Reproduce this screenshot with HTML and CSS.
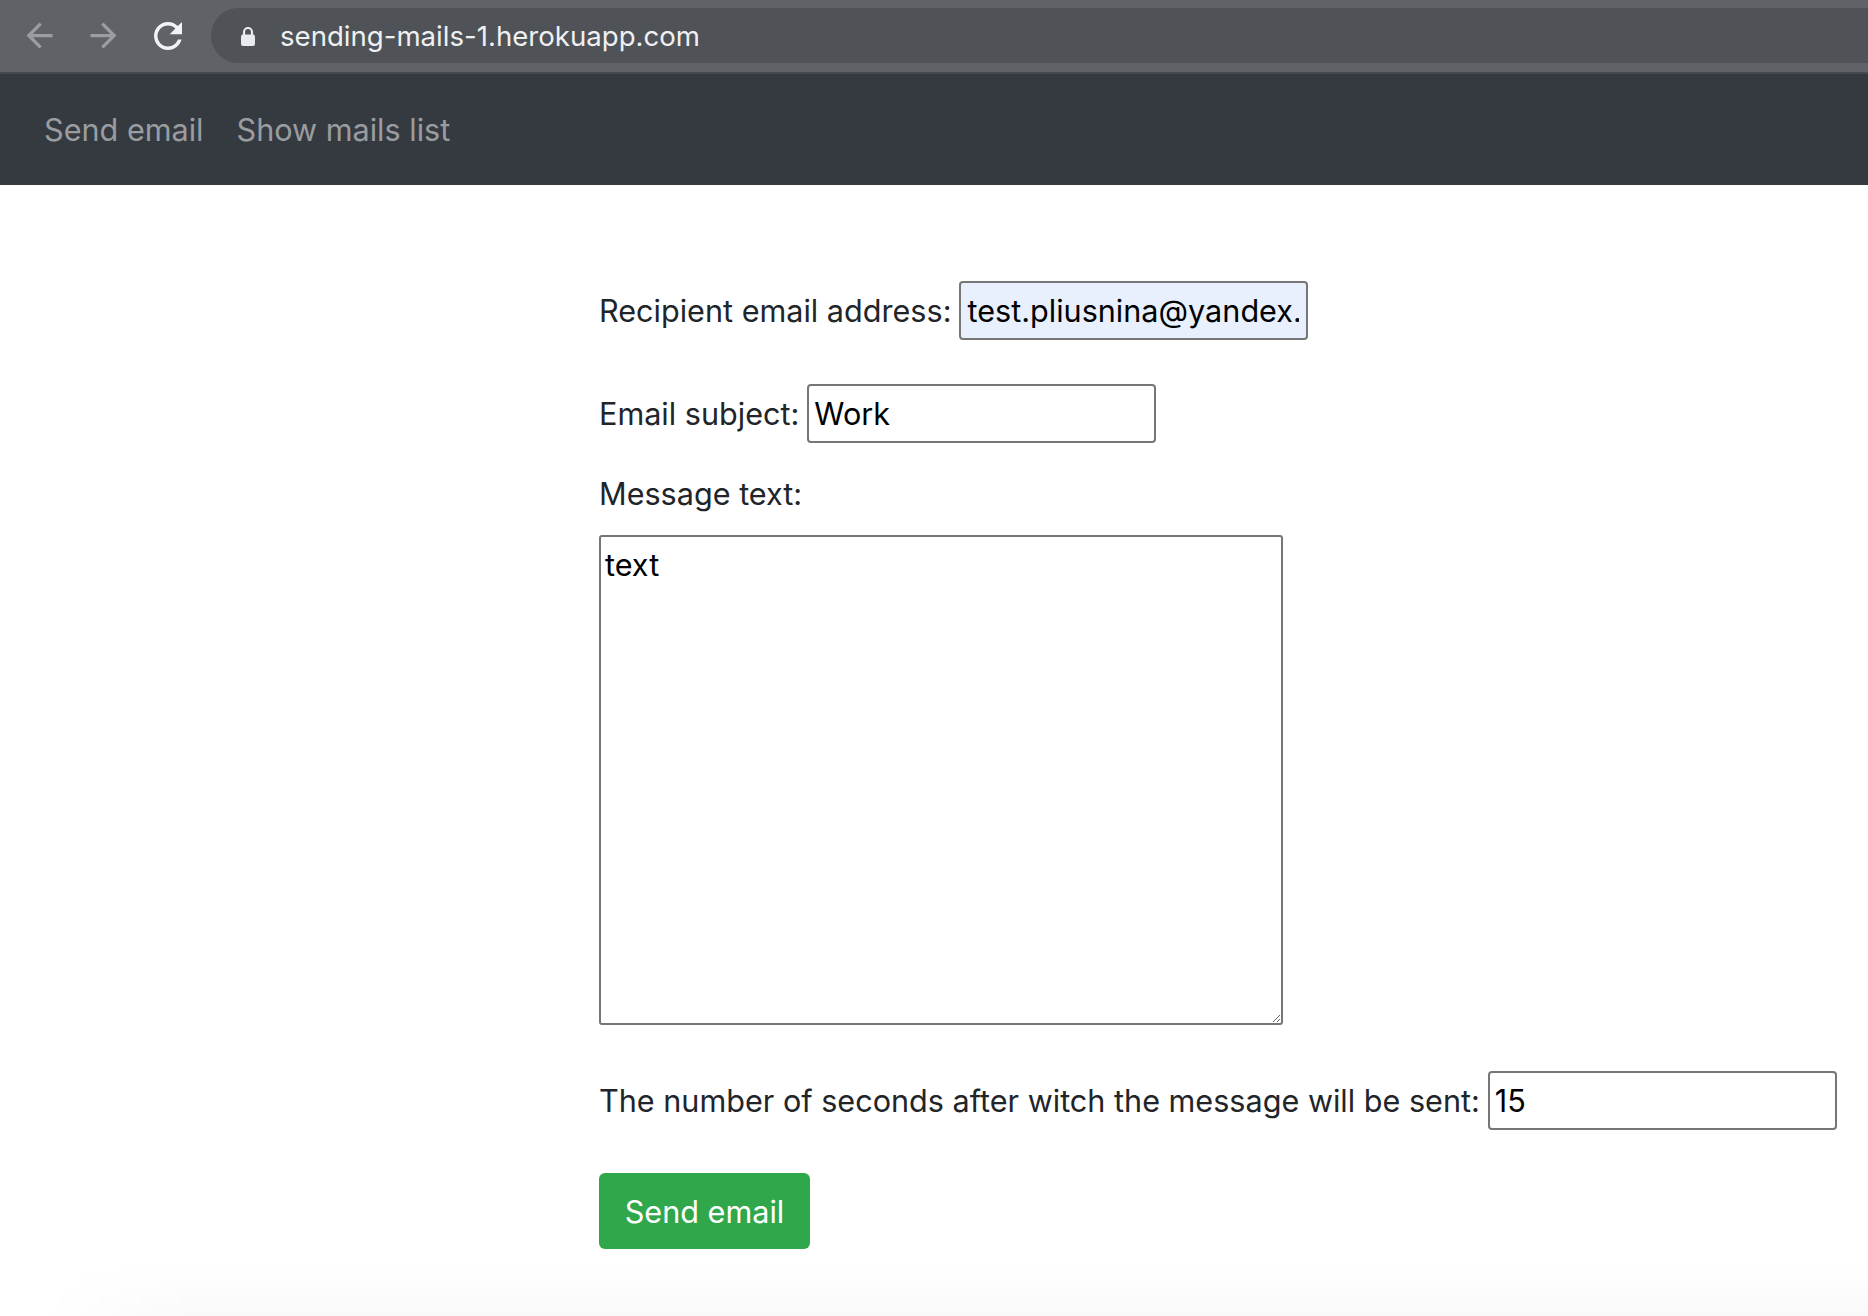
FILE: index.html
```html
<!DOCTYPE html>
<html lang="en">
<head>
<meta charset="utf-8">
<title>Send email</title>
<link rel="stylesheet" href="styles.css">
</head>
<body>
<div class="chrome">
  <div class="chrome-nav">
    <svg class="ico arrow dim" viewBox="0 0 24 24"><path d="M20 11H7.83l5.59-5.59L12 4l-8 8 8 8 1.41-1.41L7.83 13H20v-2z"/></svg>
    <svg class="ico arrow dim" viewBox="0 0 24 24"><path d="M4 11h12.17l-5.59-5.59L12 4l8 8-8 8-1.41-1.41L16.17 13H4v-2z"/></svg>
    <svg class="ico reload" viewBox="0 0 24 24"><path d="M17.65 6.35C16.2 4.9 14.21 4 12 4c-4.42 0-7.99 3.58-7.99 8s3.57 8 7.99 8c3.73 0 6.84-2.55 7.73-6h-2.08c-.82 2.330-3.04 4-5.65 4-3.31 0-6-2.690-6-6s2.69-6 6-6c1.66 0 3.14.69 4.22 1.78L13 11h7V4l-2.35 2.35z"/></svg>
  </div>
  <div class="omnibox">
    <svg class="lock" viewBox="0 0 16 20"><path d="M4 9.5V6a4 4 0 0 1 8 0v3.5" fill="none" stroke="#e8eaed" stroke-width="2.2"/><rect x="1" y="8.5" width="14" height="11.5" rx="2" fill="#e8eaed"/></svg>
    <span class="url">sending-mails-1.herokuapp.com</span>
  </div>
</div>
<nav class="navbar">
  <a class="nav-link" href="#">Send email</a>
  <a class="nav-link" href="#">Show mails list</a>
</nav>
<main class="container">
  <form class="mail-form">
    <div class="field-row row-email">
      <label class="label" for="to">Recipient email address:</label>
      <input class="input input-autofill" id="to" type="text" value="test.pliusnina@yandex.ru">
    </div>
    <div class="field-row row-subject">
      <label class="label" for="subject">Email subject:</label>
      <input class="input" id="subject" type="text" value="Work">
    </div>
    <label class="label label-block" for="msg">Message text:</label>
    <textarea class="textarea" id="msg">text</textarea>
    <div class="field-row row-seconds">
      <label class="label" for="sec">The number of seconds after witch the message will be sent:</label>
      <input class="input" id="sec" type="text" value="15">
    </div>
    <button class="btn-send" type="button">Send email</button>
  </form>
</main>
<div class="bottom-shade"></div>
</body>
</html>
```
FILE: styles.css
```css
* { box-sizing: border-box; }
html, body { margin: 0; padding: 0; }
body {
  background: #ffffff;
  font-family: "Inter", "Liberation Sans", sans-serif;
  color: #212529;
  min-height: 1316px;
}
.chrome {
  height: 74px;
  background: #5f6267;
  border-bottom: 2px solid #46494e;
  display: flex;
  align-items: flex-start;
  padding-top: 8px;
}
.chrome-nav {
  display: flex;
  align-items: center;
  height: 55px;
  padding-left: 20px;
  gap: 25px;
}
.ico { width: 39px; height: 39px; display: block; }
.ico.dim path { fill: #9a9da1; }
.ico.reload { width: 42px; height: 42px; margin-left: -1px; }
.ico.reload path { fill: #f1f3f4; }
.omnibox {
  margin-left: 22px;
  flex: 1;
  height: 55px;
  background: #4f5257;
  border-radius: 28px 0 0 28px;
  display: flex;
  align-items: center;
  padding-left: 29px;
}
.lock { width: 16px; height: 20px; display: block; }
.url {
  margin-left: 24px;
  font-family: "Inter", "Liberation Sans", sans-serif;
  font-size: 27.6px;
  color: #eef0f2;
}
.navbar {
  height: 111px;
  background: #353a41;
  display: flex;
  align-items: center;
  padding-left: 44px;
  gap: 33px;
}
.nav-link {
  color: #9a9da0;
  text-decoration: none;
  font-size: 30.6px;
}
.container {
  width: 670px;
  margin: 0 auto;
  padding-top: 96px;
}
.mail-form { display: flex; flex-direction: column; align-items: flex-start; }
.field-row {
  display: flex;
  align-items: center;
  gap: 8px;
  white-space: nowrap;
}
.row-subject { margin-top: 44px; }
.row-seconds { margin-top: 46px; }
.label {
  font-size: 30.6px;
  line-height: 36px;
  color: #212529;
}
.label-block { margin-top: 33px; display: block; }
.input {
  width: 349px;
  height: 59px;
  border: 2px solid #767676;
  border-radius: 4px;
  padding: 0 5px;
  font-family: "Inter", "Liberation Sans", sans-serif;
  font-size: 30.6px;
  color: #000;
  background: #fff;
  flex: none;
}
.input-autofill { background: #e8f0fe; padding: 0 7px 0 6px; }
.textarea {
  margin-top: 23px;
  width: 684px;
  height: 490px;
  border: 2px solid #767676;
  border-radius: 3px;
  padding: 10px 4px;
  font-family: "Inter", "Liberation Sans", sans-serif;
  font-size: 30.6px;
  line-height: 36px;
  color: #000;
  resize: both;
}
.btn-send {
  margin-top: 43px;
  width: 211px;
  height: 76px;
  background: #2fa74a;
  border: none;
  border-radius: 6px;
  color: #fff;
  font-family: "Inter", "Liberation Sans", sans-serif;
  font-size: 30.6px;
  padding: 0;
}
.bottom-shade {
  position: fixed;
  left: 40px;
  right: 0;
  bottom: 0;
  height: 50px;
  pointer-events: none;
  background: linear-gradient(to bottom, rgba(0,0,0,0), rgba(0,0,0,0.022));
  -webkit-mask-image: linear-gradient(to right, transparent 0, #000 160px);
  mask-image: linear-gradient(to right, transparent 0, #000 160px);
}
```
